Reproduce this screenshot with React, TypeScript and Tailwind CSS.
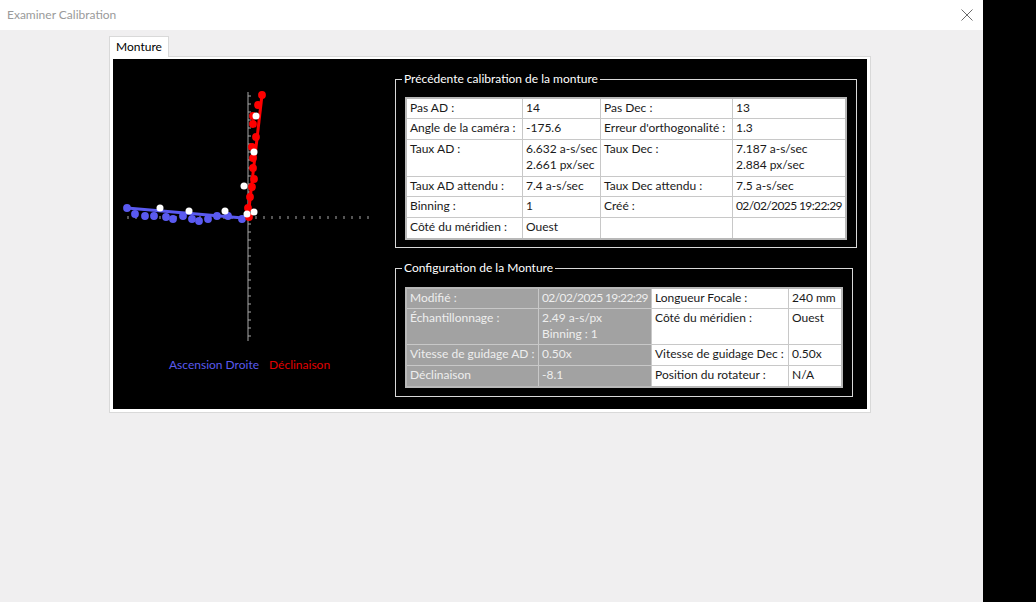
const font = { fontFamily: 'Lato, "Noto Sans", sans-serif' };

const blueDots: [number, number][] = [
  [127, 208], [135, 214], [145, 216], [154, 216], [166, 217], [173, 219], [183, 216],
  [192, 219], [199, 221], [208, 219], [217, 216], [228, 216], [242, 219],
];
const redDots: [number, number][] = [
  [262, 95], [258, 105], [253, 116], [253, 124], [256, 137], [252, 147], [253, 158],
  [253, 168], [254, 179], [252, 187], [250, 197], [248, 208], [249, 217],
];
const whiteDots: [number, number][] = [
  [160, 208], [189, 211], [225, 211], [247, 214], [254, 212], [256, 116], [254, 152], [244, 186],
];

const ticks = Array.from({ length: 31 }, (_, i) => i - 15);

function Chart() {
  // origin of the svg sits at page (113, 59)
  const ox = 135;
  const oy = 157;
  return (
    <svg width="282" height="290" viewBox="0 0 282 290" className="block">
      <line x1={ox} y1={33} x2={ox} y2={282} stroke="#a8a8a8" strokeWidth="1" />
      {ticks.map((t) => (
        <line key={'v' + t} x1={ox} y1={oy + t * 8} x2={ox + 3} y2={oy + t * 8} stroke="#a8a8a8" strokeWidth="1" />
      ))}
      {ticks.map((t) => (
        <line key={'h' + t} x1={ox + t * 8} y1={oy} x2={ox + t * 8} y2={oy + 3} stroke="#a8a8a8" strokeWidth="1" />
      ))}
      <line x1={14} y1={149} x2={130} y2={159} stroke="#5a5af0" strokeWidth="3" />
      {blueDots.map(([x, y], i) => (
        <circle key={'b' + i} cx={x - 113} cy={y - 59} r="3.9" fill="#5a5af0" />
      ))}
      <line x1={135} y1={158} x2={149} y2={36} stroke="#ff0000" strokeWidth="3" />
      {redDots.map(([x, y], i) => (
        <circle key={'r' + i} cx={x - 113} cy={y - 59} r="3.9" fill="#ff0000" />
      ))}
      {whiteDots.map(([x, y], i) => (
        <circle key={'w' + i} cx={x - 113} cy={y - 59} r="3.5" fill="#ffffff" />
      ))}
    </svg>
  );
}

type Cell = { text: string; gray?: boolean; tight?: boolean };

function Grid({ cols, rows, cells }: { cols: string; rows: string; cells: Cell[] }) {
  return (
    <div className={`grid ${cols} ${rows} gap-px bg-[#c8c8c8] border-2 border-[#b8b8b8]`}>
      {cells.map((c, i) => (
        <div
          key={i}
          className={`overflow-hidden whitespace-pre pl-[3px] pt-[1px] text-[12px] leading-[16px] ${
            c.gray ? 'bg-[#a2a2a2] text-[#eeeeee]' : 'bg-white text-[#1a1a1a]'
          } ${c.tight ? 'tracking-[-0.6px]' : ''}`}
        >
          {c.text}
        </div>
      ))}
    </div>
  );
}

function Group({ title, className, children }: { title: string; className: string; children: React.ReactNode }) {
  return (
    <div className={`relative border border-[#d8d8d8] ${className}`}>
      <span className="absolute -top-[9px] left-[6px] bg-black px-[2px] text-[12px] leading-[16px] text-white">{title}</span>
      {children}
    </div>
  );
}

const calib: Cell[] = [
  { text: 'Pas AD :' }, { text: '14' }, { text: 'Pas Dec :' }, { text: '13' },
  { text: 'Angle de la caméra :' }, { text: '-175.6' }, { text: "Erreur d'orthogonalité :" }, { text: '1.3' },
  { text: 'Taux AD :' }, { text: '6.632 a-s/sec\n2.661 px/sec' }, { text: 'Taux Dec :' }, { text: '7.187 a-s/sec\n2.884 px/sec' },
  { text: 'Taux AD attendu :' }, { text: '7.4 a-s/sec' }, { text: 'Taux Dec attendu :' }, { text: '7.5 a-s/sec' },
  { text: 'Binning :' }, { text: '1' }, { text: 'Créé :' }, { text: '02/02/2025 19:22:29', tight: true },
  { text: 'Côté du méridien :' }, { text: 'Ouest' }, { text: '' }, { text: '' },
];

const config: Cell[] = [
  { text: 'Modifié :', gray: true }, { text: '02/02/2025 19:22:29', gray: true, tight: true }, { text: 'Longueur Focale :' }, { text: '240 mm' },
  { text: 'Échantillonnage :', gray: true }, { text: '2.49 a-s/px\nBinning : 1', gray: true }, { text: 'Côté du méridien :' }, { text: 'Ouest' },
  { text: 'Vitesse de guidage AD :', gray: true }, { text: '0.50x', gray: true }, { text: 'Vitesse de guidage Dec :' }, { text: '0.50x' },
  { text: 'Déclinaison', gray: true }, { text: '-8.1', gray: true }, { text: 'Position du rotateur :' }, { text: 'N/A' },
];

export default function App() {
  return (
    <div className="flex h-[602px] w-[1036px] overflow-hidden" style={font}>
      <div className="flex w-[983px] flex-col bg-[#f0eff0]">
        <div className="flex h-[30px] items-center justify-between bg-white pl-[7px] pr-[10px]">
          <span className="text-[12px] text-[#9a9a9a]">Examiner Calibration</span>
          <svg width="12" height="12" viewBox="0 0 12 12">
            <path d="M0.5 0.5 L11.5 11.5 M11.5 0.5 L0.5 11.5" stroke="#6a6a6a" strokeWidth="1" />
          </svg>
        </div>
        <div className="flex flex-col pl-[109px] pt-[6px]">
          <div className="flex">
            <div className="relative z-10 -mb-px flex h-[21px] w-[60px] items-center justify-center border border-b-0 border-[#d9d9d9] bg-white text-[12px] text-black">
              Monture
            </div>
          </div>
          <div className="h-[357px] w-[762px] border border-[#d9d9d9] bg-white pb-[3px] pl-[3px] pr-[3px] pt-[2px]">
            <div className="flex h-[350px] w-[754px] bg-black">
              <div className="flex w-[282px] flex-col">
                <Chart />
                <div className="mt-[8px] flex gap-[10px] pl-[56px] text-[12px] leading-[16px]">
                  <span className="text-[#5a5aee]">Ascension Droite</span>
                  <span className="text-[#e00000]">Déclinaison</span>
                </div>
              </div>
              <div className="flex flex-col pt-[20px]">
                <Group title="Précédente calibration de la monture" className="h-[169px] w-[462px] pl-[9px] pt-[17px]">
                  <div className="w-[442px]">
                    <Grid
                      cols="grid-cols-[115px_77px_131px_112px]"
                      rows="grid-rows-[19px_20px_36px_19px_20px_20px]"
                      cells={calib}
                    />
                  </div>
                </Group>
                <Group title="Configuration de la Monture" className="mt-[20px] h-[129px] w-[458px] pl-[9px] pt-[18px]">
                  <div className="w-[438px]">
                    <Grid
                      cols="grid-cols-[131px_112px_136px_52px]"
                      rows="grid-rows-[19px_35px_20px_20px]"
                      cells={config}
                    />
                  </div>
                </Group>
              </div>
            </div>
          </div>
        </div>
      </div>
      <div className="w-[53px] bg-black" />
    </div>
  );
}
